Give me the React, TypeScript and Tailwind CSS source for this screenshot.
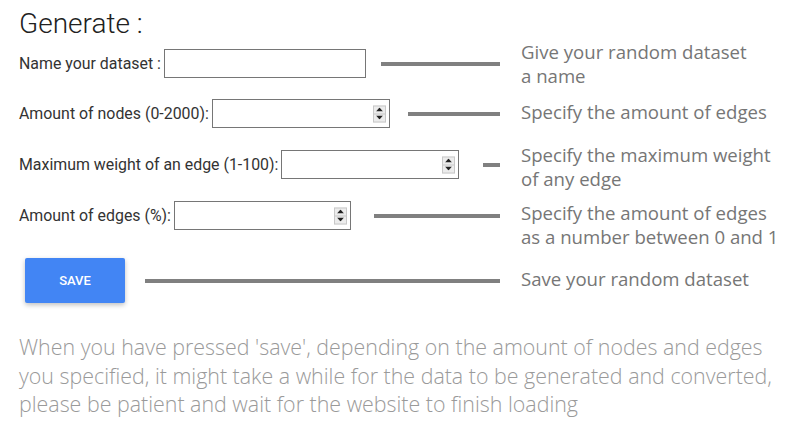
import React from "react";

const Spinner = () => (
  <span className="absolute right-[4px] top-1/2 -translate-y-1/2 flex flex-col w-[13px] h-[17px] border border-[#c8c8c8] bg-[#ececec]">
    <span className="flex-1 flex items-center justify-center border-b border-[#c8c8c8]">
      <svg width="7" height="4" viewBox="0 0 7 4">
        <polygon points="0,4 7,4 3.5,0" fill="#222" />
      </svg>
    </span>
    <span className="flex-1 flex items-center justify-center">
      <svg width="7" height="4" viewBox="0 0 7 4">
        <polygon points="0,0 7,0 3.5,4" fill="#222" />
      </svg>
    </span>
  </span>
);

type RowProps = {
  label: string;
  inputWidth: string;
  lineGap: string;
  descOffset: string;
  number?: boolean;
  desc: string[];
  rowTop: string;
};

const Row = ({ label, inputWidth, lineGap, descOffset, number, desc, rowTop }: RowProps) => (
  <div className={`flex items-start h-[29px] ${rowTop}`}>
    <div className="flex items-center w-[481px] h-[29px]">
      <label className="text-[15.9px] text-[#333] whitespace-nowrap mr-[3px]">{label}</label>
      <div className={`relative h-[29px] ${inputWidth}`}>
        <input
          type="text"
          className="w-full h-full border border-[#767676] bg-white outline-none px-1"
        />
        {number && <Spinner />}
      </div>
      <div className={`flex-1 h-[4px] bg-[#808080] ${lineGap}`} />
    </div>
    <div
      className={`ml-[21px] text-[18.6px] leading-[24px] text-[#767676] whitespace-nowrap ${descOffset}`}
      style={{ fontFamily: '"Open Sans", sans-serif' }}
    >
      {desc.map((d) => (
        <div key={d}>{d}</div>
      ))}
    </div>
  </div>
);

export default function App() {
  return (
    <div
      className="w-[800px] h-[442px] bg-white pl-[19px] pt-[8px] overflow-hidden"
      style={{ fontFamily: 'Roboto, "Liberation Sans", sans-serif' }}
    >
      <h1 className="text-[28px] font-light leading-[32px] text-[#212121]">Generate :</h1>

      <Row
        rowTop="mt-[9px]"
        label="Name your dataset :"
        inputWidth="w-[202px]"
        lineGap="ml-[15px]"
        descOffset="-mt-[9px]"
        desc={["Give your random dataset", "a name"]}
      />
      <Row
        rowTop="mt-[21px]"
        label="Amount of nodes (0-2000):"
        inputWidth="w-[178px]"
        lineGap="ml-[18px]"
        descOffset="mt-[1px]"
        number
        desc={["Specify the amount of edges"]}
      />
      <Row
        rowTop="mt-[22px]"
        label="Maximum weight of an edge (1-100):"
        inputWidth="w-[178px]"
        lineGap="ml-[24px]"
        descOffset="-mt-[7px]"
        number
        desc={["Specify the maximum weight", "of any edge"]}
      />
      <Row
        rowTop="mt-[22px]"
        label="Amount of edges (%):"
        inputWidth="w-[177px]"
        lineGap="ml-[23px]"
        descOffset="mt-[0px]"
        number
        desc={["Specify the amount of edges", "as a number between 0 and 1"]}
      />

      <div className="flex items-center h-[45px] mt-[28px]">
        <div className="flex items-center w-[481px]">
          <button className="ml-[6px] w-[100px] h-[45px] rounded-[2px] bg-[#4285f4] text-white text-[13px] font-medium uppercase shadow-[0_2px_5px_rgba(0,0,0,0.25)]">
            Save
          </button>
          <div className="flex-1 h-[4px] bg-[#808080] ml-[20px]" />
        </div>
        <div
          className="ml-[21px] text-[18.6px] leading-[24px] text-[#767676] -mt-[3px] whitespace-nowrap"
          style={{ fontFamily: '"Open Sans", sans-serif' }}
        >
          Save your random dataset
        </div>
      </div>

      <p
        className="mt-[30px] text-[21.4px] font-light leading-[28.5px] text-[#9a9a9a] whitespace-nowrap"
        style={{ fontFamily: '"Open Sans", sans-serif' }}
      >
        When you have pressed 'save', depending on the amount of nodes and edges
        <br />
        you specified, it might take a while for the data to be generated and converted,
        <br />
        please be patient and wait for the website to finish loading
      </p>
    </div>
  );
}
